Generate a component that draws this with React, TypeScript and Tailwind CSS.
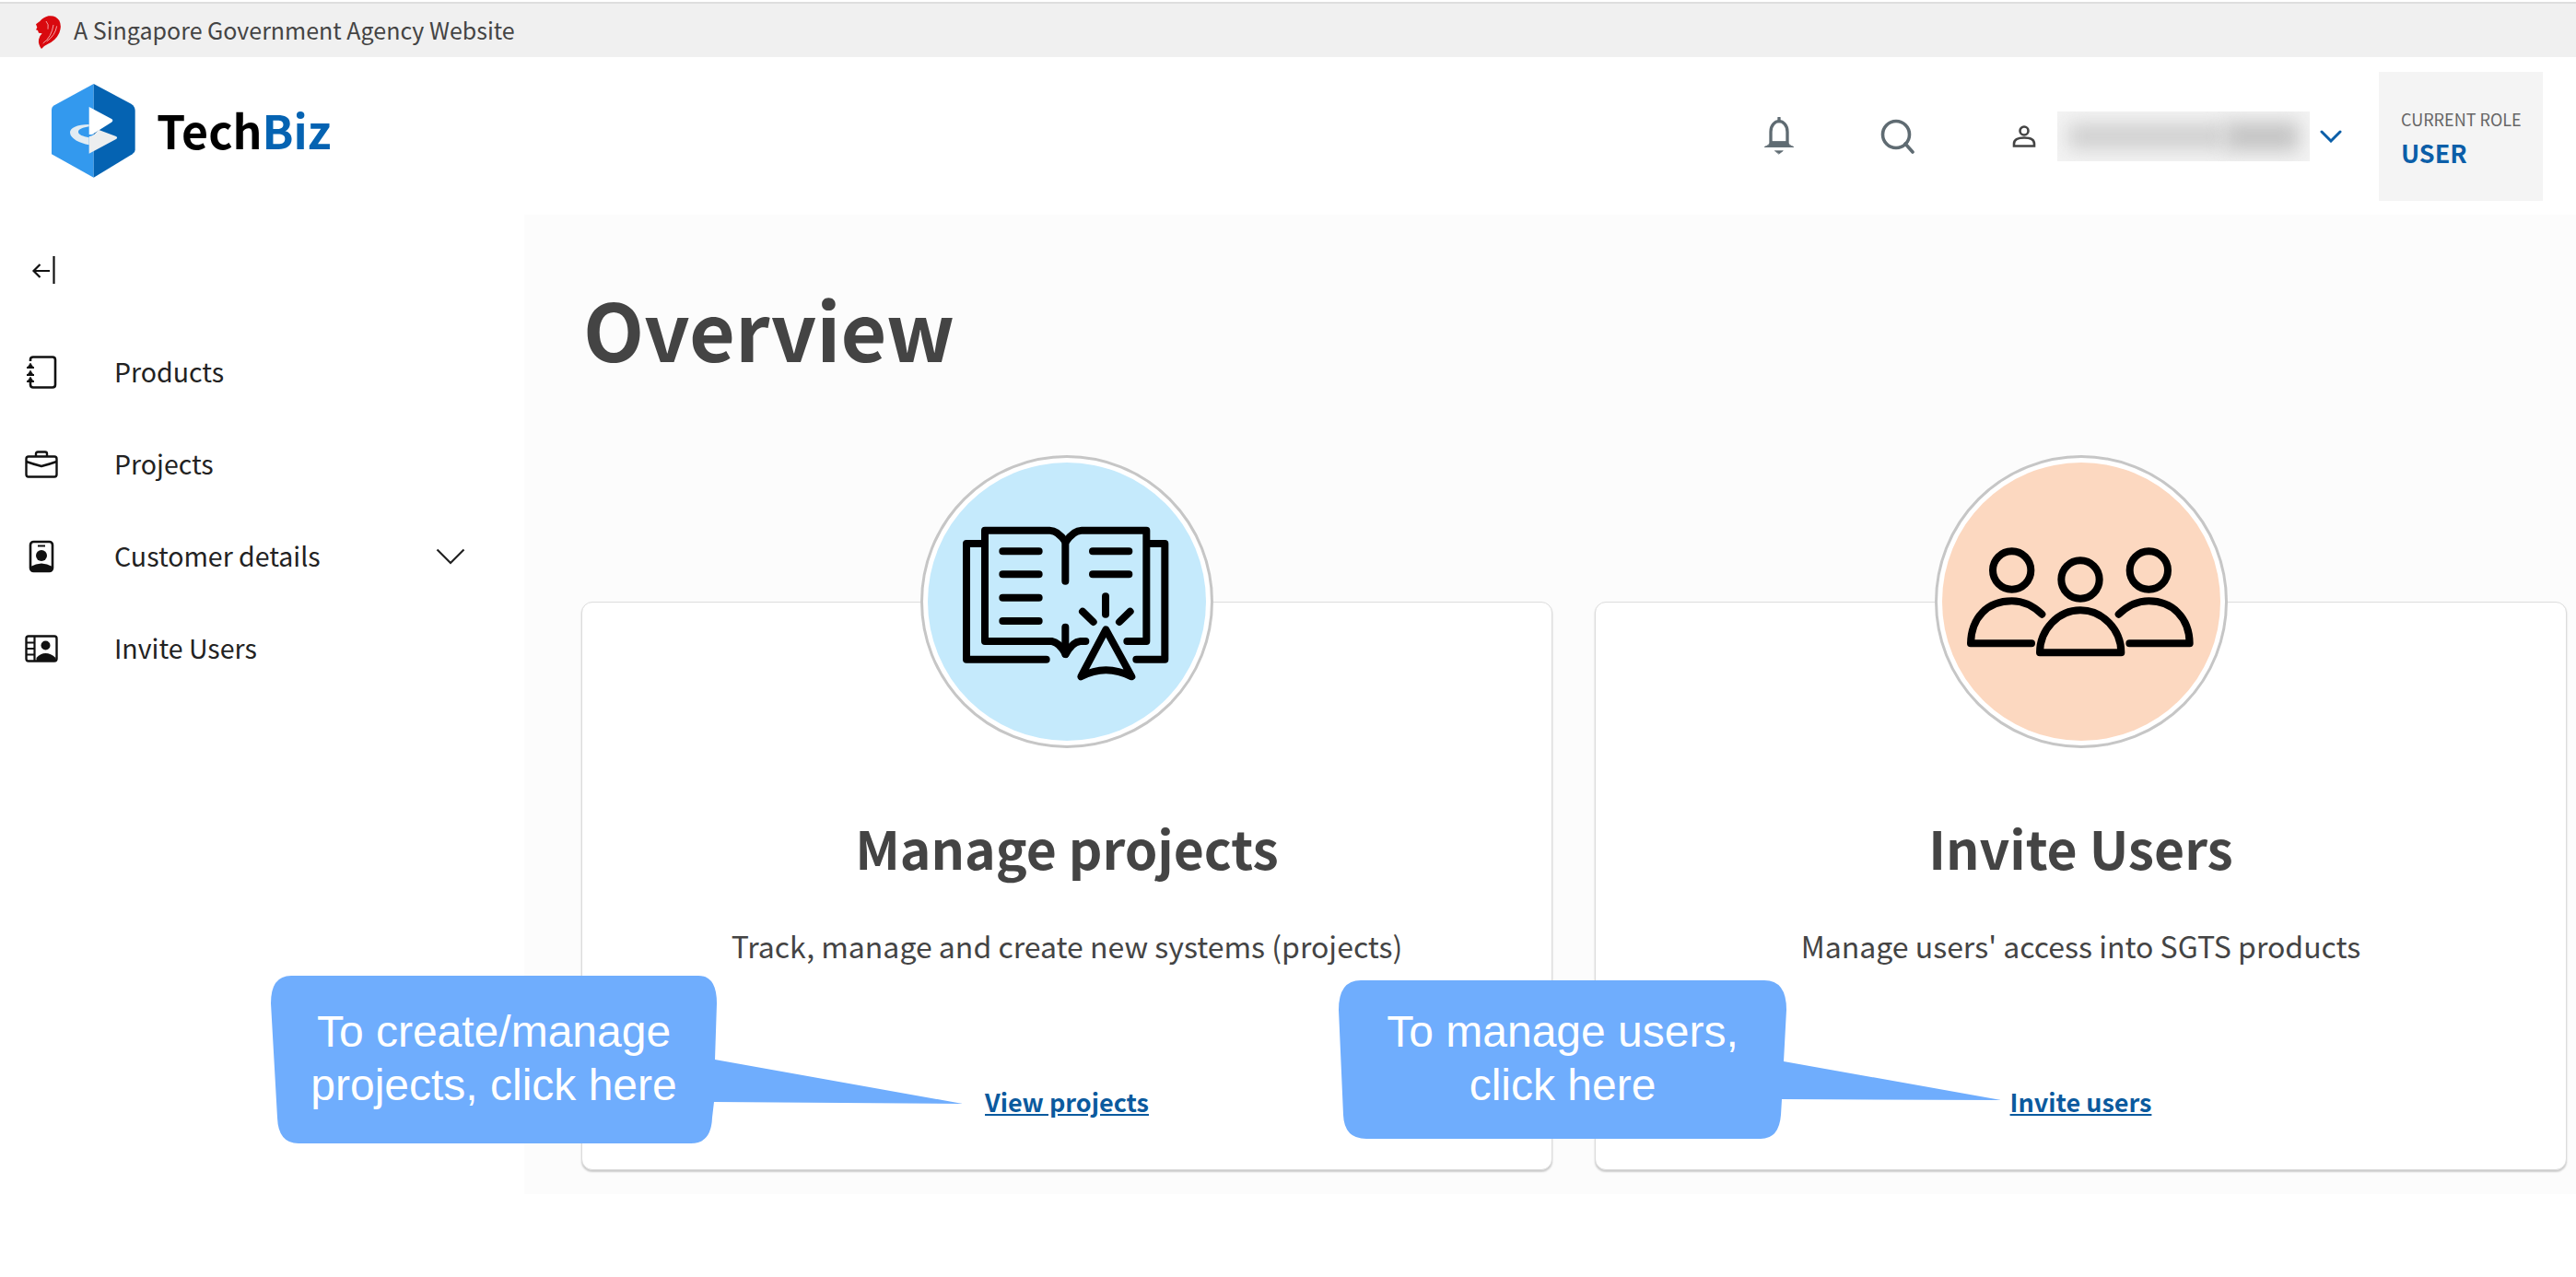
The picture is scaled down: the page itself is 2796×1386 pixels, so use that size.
const navItems = [
  { label: "Products", icon: "products" },
  { label: "Projects", icon: "projects" },
  { label: "Customer details", icon: "customer", hasChevron: true },
  { label: "Invite Users", icon: "invite" },
];

const NavIcon = ({ name }: { name: string }) => {
  if (name === "products") {
    return (
      <svg width="36" height="36" viewBox="0 0 36 36" fill="none" stroke="#111" strokeWidth="2.6">
        <path d="M6 6V4.5Q6 1.5 9 1.5H30Q33 1.5 33 4.5V31.5Q33 34.5 30 34.5H9Q6 34.5 6 31.5V29" />
        <path d="M2 13H10M2 21H10M2 28H10" strokeWidth="2" />
        <path d="M3.5 12L6 8L8.5 12ZM3.5 20L6 16L8.5 20ZM3.5 27L6 23L8.5 27Z" fill="#111" strokeWidth="0.6" />
      </svg>
    );
  }
  if (name === "projects") {
    return (
      <svg width="36" height="30" viewBox="0 0 36 30" fill="none" stroke="#111" strokeWidth="2.4">
        <rect x="1.5" y="6.5" width="33" height="22" rx="2.5" />
        <path d="M1.5 12Q10 15 18 17Q26 15 34.5 12" />
        <path d="M12 6V3.5Q12 1.5 14 1.5H22Q24 1.5 24 3.5V6" />
      </svg>
    );
  }
  if (name === "customer") {
    return (
      <svg width="28" height="36" viewBox="0 0 28 36" fill="none">
        <rect x="2" y="2" width="24" height="32" rx="3.5" stroke="#111" strokeWidth="2.6" />
        <path d="M10 6.5H18" stroke="#111" strokeWidth="2" />
        <circle cx="14" cy="17" r="6" fill="#111" />
        <path d="M2 34V29Q8 25.5 14 25.5Q20 25.5 26 29V34Z" fill="#111" />
      </svg>
    );
  }
  return (
    <svg width="36" height="30" viewBox="0 0 36 30" fill="none">
      <rect x="1.5" y="1.5" width="33" height="27" rx="2.5" stroke="#111" strokeWidth="2.4" />
      <path d="M10.5 2V28M2 8.5H10.5M2 15H10.5M2 21.5H10.5" stroke="#111" strokeWidth="2.2" />
      <circle cx="22.5" cy="11.5" r="5" fill="#111" />
      <path d="M12.5 28V25Q17 20 22.5 20Q28 20 33.5 25V28Z" fill="#111" />
    </svg>
  );
};

const BookIcon = () => (
  <svg width="318" height="318" viewBox="57 42 954 954" fill="none" stroke="#000" strokeWidth="24" strokeLinecap="round" strokeLinejoin="round">
    <path d="M262 330H207V707H467" />
    <path d="M795 330H853V707H760" />
    <path d="M595 648H578Q552 650 530 690Q510 652 485 648H267V287H478Q505 287 530 325Q555 287 582 287H793V648H730" />
    <path d="M529 325V452M529 602V690" />
    <path d="M325 355H443M325 430H443M325 506H443M325 582H443M618 355H736M618 430H736" />
    <path d="M660 502V560M585 551L620 585M740 551L705 585" />
    <path d="M661 610L745 763Q660 720 580 763Z" />
  </svg>
);

const PeopleIcon = () => (
  <svg width="318" height="318" viewBox="58 42 954 954" fill="none" stroke="#000" strokeWidth="24" strokeLinecap="round" strokeLinejoin="round">
    <circle cx="309" cy="417" r="62" />
    <circle cx="532" cy="447" r="62" />
    <circle cx="755" cy="417" r="62" />
    <path d="M407 560Q362 517 309 517C230 517 177 570 175 655H373" />
    <path d="M400 685C400 610 460 547 532 547C605 547 665 610 665 685Z" />
    <path d="M657 560Q702 517 755 517C830 517 887 570 888 655H692" />
  </svg>
);

const LionHead = () => (
  <svg width="44" height="44" viewBox="0 0 132 132">
    <path
      d="M27 46L40 36Q50 24 68 19Q92 16 103 34Q112 52 103 74Q92 98 66 110Q52 116 45 126Q34 112 36 96Q38 84 47 76L36 74L33 66L27 64L31 56Z"
      fill="#d9090f"
    />
    <path d="M50 108Q78 88 84 48M62 102Q90 82 95 52M66 62Q70 46 60 36" stroke="#f6c2c2" strokeWidth="2.5" fill="none" />
  </svg>
);

const Logo = () => (
  <svg width="120" height="120" viewBox="0 0 360 360">
    <path d="M170 33L42 103Q33 108 33 118V262L170 338Z" fill="#3399ee" />
    <path d="M170 33L292 98Q305 106 305 120V248Q305 256 296 262L170 338Z" fill="#0563b2" />
    <path d="M155 108L228 147Q236 152 228 158L165 198H155Z" fill="#fff" />
    <path d="M185 182L243 204Q250 208 243 213L155 260V205Q175 200 185 182Z" fill="#eceeef" />
    <path d="M155 165C115 165 92 178 93 192C94 212 125 226 155 232V208C135 205 120 198 120 190C120 180 135 175 155 172Z" fill="#e2ecf3" />
  </svg>
);

const ServiceCard = ({
  title,
  description,
  link,
  circleClass,
  icon,
  className,
}: {
  title: string;
  description: string;
  link: string;
  circleClass: string;
  icon: React.ReactNode;
  className: string;
}) => (
  <div className={`flex h-[617px] flex-col items-center rounded-[12px] border border-[#dcdcdc] bg-white shadow-[0_2px_2px_rgba(0,0,0,0.2)] ${className}`}>
    <div className="relative -mt-[160px] h-[318px] w-[318px] rounded-full border-[3px] border-[#c6c6c6] bg-white p-[5px]">
      <div className={`h-full w-full rounded-full ${circleClass}`} />
      <div className="absolute -top-[3px] -left-[3px] h-[318px] w-[318px]">{icon}</div>
    </div>
    <h2 className="mt-[67px] text-[57px] leading-[80px] font-bold text-[#444]">{title}</h2>
    <p className="mt-[42px] text-[32px] leading-[50px] text-[#444]">{description}</p>
    <a className="mt-[123px] text-[27px] leading-[44px] font-semibold text-[#0b5a9e] underline">{link}</a>
  </div>
);

export default function App() {
  return (
    <div className="relative flex h-[1386px] w-[2796px] flex-col overflow-hidden bg-white [font-family:'Noto_Sans_CJK_SC',sans-serif]">
      <div className="mt-[2px] flex h-[60px] items-center border-t-2 border-[#dedede] bg-[#f0f0f0] pl-[30px] text-[25px] text-[#444]">
        <LionHead />
        <span className="ml-[6px]">A Singapore Government Agency Website</span>
      </div>

      <header className="flex h-[171px] items-start bg-white">
        <div className="mt-[18px] ml-[45px] flex items-center gap-[5px]">
          <Logo />
          <span className="text-[50px] leading-none font-bold text-black">
            Tech<span className="text-[#0563b2]">Biz</span>
          </span>
        </div>
        <div className="ml-auto mt-[16px] mr-[36px] flex items-center">
          <svg width="34" height="42" viewBox="0 0 102 126" fill="none" stroke="#5f6b72" strokeWidth="10" strokeLinecap="round" className="mr-[93px]">
            <path d="M51 3V14" />
            <path d="M24 88V48C24 26 38 14 51 14C64 14 78 26 78 48V88" />
            <path d="M5 97Q20 92 24 80H78Q82 92 97 97Z" fill="#5f6b72" strokeWidth="3" strokeLinejoin="round" />
            <path d="M38 110H64L51 120Z" fill="#5f6b72" strokeWidth="2" strokeLinejoin="round" />
          </svg>
          <svg width="38" height="38" viewBox="0 0 38 38" fill="none" stroke="#5f6b72" strokeWidth="3.6" strokeLinecap="round" className="mr-[105px]">
            <circle cx="17" cy="17" r="14.5" />
            <path d="M27 27L35 36" />
          </svg>
          <svg width="26" height="24" viewBox="0 0 26 24" fill="none" stroke="#444" strokeWidth="2.6" className="mr-[23px]">
            <circle cx="13" cy="6" r="4.5" />
            <path d="M2 22.5V20Q2 13.5 13 13.5Q24 13.5 24 20V22.5Z" />
          </svg>
          <div className="flex h-[54px] w-[274px] items-center overflow-hidden bg-[#f3f3f3] px-[12px]">
            <div className="h-[28px] w-[170px] bg-[#d0d0d0] blur-[10px]" />
            <div className="h-[32px] w-[80px] bg-[#c4c4c4] blur-[10px]" />
          </div>
          <svg width="24" height="14" viewBox="0 0 24 14" fill="none" stroke="#0b5ea8" strokeWidth="3" strokeLinecap="round" className="ml-[11px] mr-[40px]">
            <path d="M2 2L12 12L22 2" />
          </svg>
          <div className="flex h-[140px] w-[178px] flex-col bg-[#f4f4f4] pl-[24px]">
            <span className="mt-[37px] text-[18px] leading-[28px] text-[#666]">CURRENT ROLE</span>
            <span className="mt-[3px] text-[27px] leading-[40px] font-semibold text-[#0b5ea8]">USER</span>
          </div>
        </div>
      </header>

      <div className="flex h-[1063px]">
        <aside className="w-[569px] pt-[45px]">
          <svg width="26" height="30" viewBox="0 0 26 30" fill="none" stroke="#111" strokeWidth="2.2" className="ml-[34px]">
            <path d="M24.5 0V30" />
            <path d="M20 16H3M9.5 9L2.5 16L9.5 23" />
          </svg>
          <nav className="mt-[46px] flex flex-col">
            {navItems.map((item) => (
              <div key={item.label} className="flex h-[100px] items-center pl-[27px]">
                <div className="mr-[61px] flex w-[36px] justify-center">
                  <NavIcon name={item.icon} />
                </div>
                <span className="mb-[2px] w-[350px] text-[28.5px] text-[#222]">{item.label}</span>
                {item.hasChevron && (
                  <svg width="32" height="18" viewBox="0 0 32 18" fill="none" stroke="#222" strokeWidth="2.2" className="-ml-[1px]">
                    <path d="M1.5 1.5L16 16L30.5 1.5" />
                  </svg>
                )}
              </div>
            ))}
          </nav>
        </aside>

        <main className="flex flex-1 flex-col bg-[#fcfcfc] pr-[10px] pl-[62px]">
          <h1 className="mt-[73px] ml-[2px] text-[86px] leading-[100px] font-bold text-[#444]">Overview</h1>
          <div className="mt-[247px] flex gap-[46px]">
            <ServiceCard
              title="Manage projects"
              description="Track, manage and create new systems (projects)"
              link="View projects"
              circleClass="bg-[#c5eafc]"
              icon={<BookIcon />}
              className="w-[1054px]"
            />
            <ServiceCard
              title="Invite Users"
              description="Manage users' access into SGTS products"
              link="Invite users"
              circleClass="bg-[#fcd8c0]"
              icon={<PeopleIcon />}
              className="w-[1055px]"
            />
          </div>
        </main>
      </div>

      <div className="absolute top-[1059px] left-[294px] h-[182px] w-[752px]">
        <svg width="752" height="182" viewBox="0 0 752 182" className="absolute inset-0">
          <path d="M22 0H464Q484 0 484 30L482 91L751 139L481 137L479 154Q478 182 456 182H30Q8 182 7 154L0 30Q0 0 22 0Z" fill="#6fadfd" />
        </svg>
        <div className="absolute top-[32px] left-0 w-[484px] text-center [font-family:'Liberation_Sans',sans-serif] text-[48px] leading-[58px] text-white">
          To create/manage
          <br />
          projects, click here
        </div>
      </div>

      <div className="absolute top-[1064px] left-[1453px] h-[172px] w-[720px]">
        <svg width="720" height="172" viewBox="0 0 720 172" className="absolute inset-0">
          <path d="M24 0H462Q486 0 486 32L483 88L719 130L481 129L480 146Q478 172 458 172H30Q6 172 5 146L0 32Q0 0 24 0Z" fill="#6fadfd" />
        </svg>
        <div className="absolute top-[27px] left-0 w-[486px] text-center [font-family:'Liberation_Sans',sans-serif] text-[48px] leading-[58px] text-white">
          To manage users,
          <br />
          click here
        </div>
      </div>
    </div>
  );
}
